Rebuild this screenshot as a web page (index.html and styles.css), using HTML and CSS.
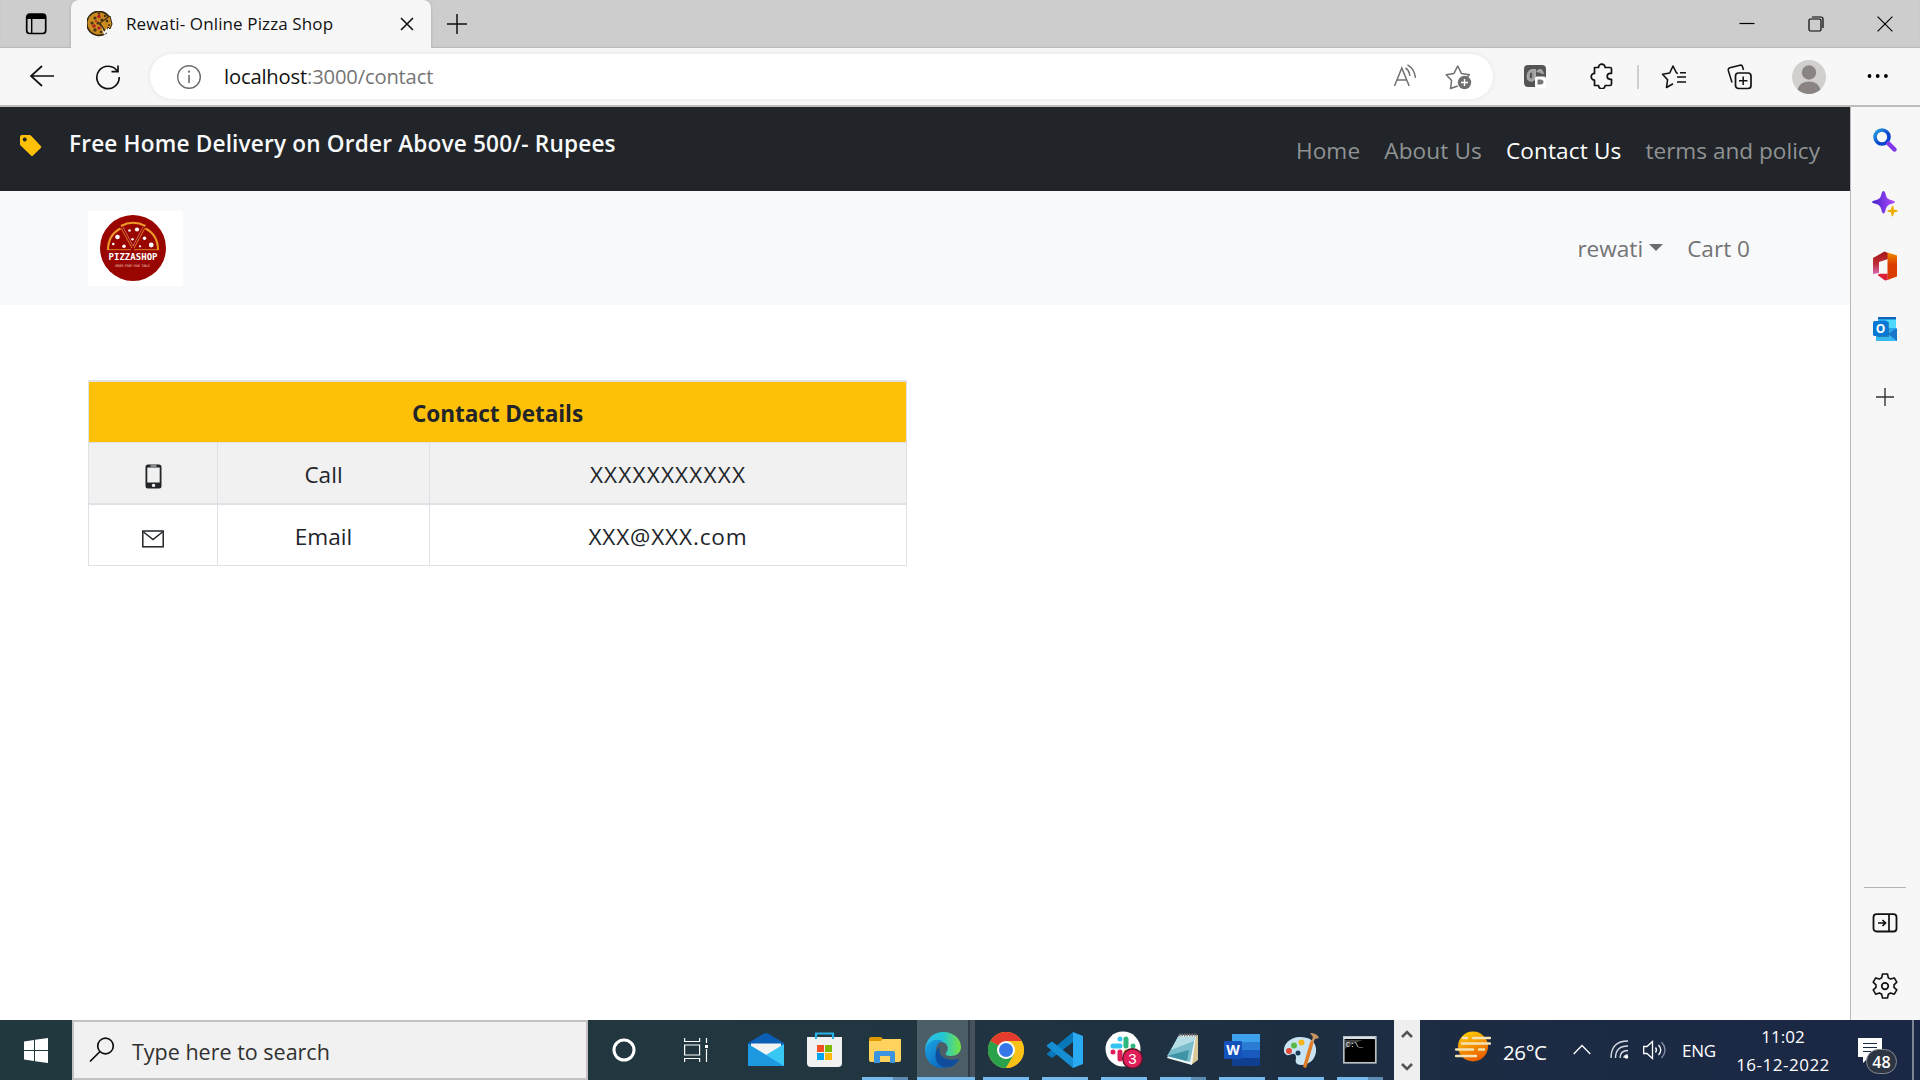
FILE: index.html
```html
<!DOCTYPE html>
<html lang="en">
<head>
<meta charset="utf-8">
<title>Rewati- Online Pizza Shop</title>
<link rel="stylesheet" href="styles.css">
</head>
<body>
<header class="titlebar">
  <div class="tab-actions"><svg width="23" height="22" viewBox="0 0 23 22"><rect x="1.7" y="1.2" width="19" height="19.3" rx="3" fill="none" stroke="#000" stroke-width="1.7"/><path d="M1.5 6V4q0-3 3-3H18q3 0 3 3v2z"/><path d="M6.7 5v15" stroke="#000" stroke-width="1.4"/></svg></div>
  <div class="tab">
    <svg width="26" height="26" viewBox="0 0 26 26"><path d="M13 13 22 6a12 12 0 1 0-3 16z" fill="#c98a20" stroke="#33250f" stroke-width="1.6"/><path d="M13 12 23 5l2 8-2 5-2-2-2 5-2-3z" fill="#c98a20" stroke="#33250f"/><path d="m14 14 3 7 3-4 1 3-4 4z" fill="#f7f7f7"/><g fill="#493414"><circle cx="8" cy="7" r="1.6"/><circle cx="15" cy="9" r="1.6"/><circle cx="5" cy="12" r="1.6"/><circle cx="8" cy="19" r="1.7"/><circle cx="14" cy="21" r="1.3"/><circle cx="11" cy="12" r="1.6"/><circle cx="18" cy="5" r="1.300"/><circle cx="20" cy="10" r="1.400"/><circle cx="22" cy="14" r="1"/><circle cx="12" cy="2.500" r="1.200"/></g><g fill="#b91b22"><circle cx="12" cy="5.500" r="1.800"/><circle cx="7" cy="15" r="1.800"/><circle cx="12" cy="17" r="1.600"/><circle cx="9" cy="10" r="1"/></g></svg>
    <span class="tab-title">Rewati- Online Pizza Shop</span>
    <svg class="tab-close" width="14" height="14" viewBox="0 0 14 14"><path d="M1 1l12 12M13 1 1 13" stroke="#111" stroke-width="1.6"/></svg>
  </div>
  <svg class="new-tab" width="22" height="22" viewBox="0 0 22 22"><path d="M11 1v20M1 11h20" stroke="#111" stroke-width="1.5"/></svg>
  <div class="window-controls">
    <svg width="16" height="16" viewBox="0 0 16 16"><path d="M.5 7.500h15" stroke="#000" stroke-width="1.2"/></svg>
    <svg width="16" height="16" viewBox="0 0 16 16"><rect x="1" y="3" width="12" height="12" rx="1.5" fill="none" stroke="#000" stroke-width="1.2"/><path d="M4 1h9q2 0 2 2v9" fill="none" stroke="#000" stroke-width="1.2"/></svg>
    <svg width="16" height="16" viewBox="0 0 16 16"><path d="M.6.6l14.8 14.8M15.400.6.6 15.400" stroke="#000" stroke-width="1.2"/></svg>
  </div>
</header>

<div class="toolbar">
  <svg class="back" width="26" height="24" viewBox="0 0 26 24"><path d="M13 2 2 12l11 10M2 12h23" fill="none" stroke="#111" stroke-width="1.7"/></svg>
  <svg class="reload" width="26" height="26" viewBox="0 0 26 26"><path d="M22.500 7.500A11.200 11.200 0 1 0 24.200 13M23 1.500v6.200h-6.500" fill="none" stroke="#111" stroke-width="1.7"/></svg>
  <div class="address">
    <svg width="26" height="26" viewBox="0 0 26 26"><circle cx="13" cy="13" r="11.300" fill="none" stroke="#6b6b6b" stroke-width="1.400"/><path d="M13 11v8" stroke="#6b6b6b" stroke-width="1.600"/><circle cx="13" cy="7.700" r="1.100" fill="#6b6b6b"/></svg>
    <span class="url">localhost<span class="url-path">:3000/contact</span></span>
    <svg class="read-aloud" width="24" height="24" viewBox="0 0 24 24"><path d="M1.500 22 8.800 4l7.400 18M4 16h9.500M12.500 4q4 2.500 4.300 8M14.500.8q7 4 8 13" fill="none" stroke="#6f6f6f" stroke-width="1.500"/></svg>
    <svg class="add-star" width="28" height="26" viewBox="0 0 28 26"><path d="M12.800 22 5.500 24.500 6.600 16.500 1.200 10.800 9 9.400 12.700 2l3.700 7.400 8 1.400-2.300 2.500" fill="none" stroke="#6f6f6f" stroke-width="1.500" stroke-linejoin="round"/><circle cx="19.500" cy="18.500" r="6.700" fill="#6f6f6f"/><path d="M19.500 15v7M16 18.500h7" stroke="#fff" stroke-width="1.400"/></svg>
  </div>
  <svg class="extension" width="22" height="23" viewBox="0 0 22 23"><rect width="22" height="22" rx="4" fill="#555"/><path d="M8 5C4 6 3 10 4 14q4 4 7-1V5zM13 7q4-5 6 2" fill="#999" stroke="#aaa" stroke-width="2"/><path d="M7 8v5" stroke="#555" stroke-width="2"/><rect x="11" y="11.500" width="11" height="11.500" rx="2" fill="#fff"/><path d="M13.500 14.500h3q3 0 3 2.500t-3 2.500h-3z" fill="#777"/></svg>
  <svg class="puzzle" width="24" height="26" viewBox="0 0 24 26"><path d="M4.500 4.500h4a3.300 3.300 0 0 1 6.600 0H20q1.500 0 1.500 1.500v4.300h-1.300a3 3 0 0 0 0 6h1.300V21q0 1.500-1.500 1.500h-4.900a3.300 3.300 0 0 1-6.600 0H4.500V17a3.300 3.300 0 0 1 0-6.600z" fill="none" stroke="#111" stroke-width="1.700" stroke-linejoin="round"/></svg>
  <span class="divider"></span>
  <svg class="favorites" width="26" height="26" viewBox="0 0 26 26"><path d="M17 9.200 15.500 9 12 2 8.700 9 1.500 10.200 6.600 15.700 5.500 23.500 12 19.800M16 13h9M16 18h9M19 8.700h6" fill="none" stroke="#111" stroke-width="1.600" stroke-linejoin="round"/></svg>
  <svg class="collections" width="26" height="26" viewBox="0 0 26 26"><rect x="8.500" y="9" width="15.500" height="15.500" rx="3" fill="none" stroke="#111" stroke-width="1.700"/><path d="M16.200 12.500v8.500M12 16.800h8.500M5 18.500 1.300 6.500q-.5-2 1.500-2.800L13 1.200q2-.4 2.600 1.500L16.500 6" fill="none" stroke="#111" stroke-width="1.500"/></svg>
  <svg class="profile" width="34" height="34" viewBox="0 0 34 34"><circle cx="17" cy="17" r="17" fill="#d2d0ce"/><circle cx="17" cy="12.500" r="7.200" fill="#8a8583"/><path d="M5.500 29.500Q8 21.500 17 21.500t11.500 8a17 17 0 0 1-23 0z" fill="#8a8583"/></svg>
  <svg class="more" width="22" height="6" viewBox="0 0 22 6"><circle cx="2.500" cy="3" r="1.900"/><circle cx="10.700" cy="3" r="1.900"/><circle cx="18.900" cy="3" r="1.900"/></svg>
</div>

<div class="workspace">
  <main class="page">
    <nav class="promo">
      <svg width="22" height="22" viewBox="0 0 22 22"><path fill-rule="evenodd" d="M2 0h7.500q.8 0 1.400.6L20.800 11q1 1 0 2L13 20.500q-1 1-2 0L.6 10.500Q0 10 0 9V2Q0 0 2 0zM4.700 2.500a2 2 0 1 0 .1 0z" fill="#ffc107"/></svg>
      <span class="promo-text">Free Home Delivery on Order Above 500/- Rupees</span>
      <div class="links"><a>Home</a><a>About Us</a><a class="active">Contact Us</a><a class="terms">terms and policy</a></div>
    </nav>
    <nav class="shop-nav">
      <svg width="95" height="75" viewBox="0 0 95 75"><rect width="95" height="75" fill="#fff"/><circle cx="45" cy="37" r="33" fill="#990500"/><g fill="none" stroke="#ee9b28"><path d="M20 39Q20 24 32.500 17.500M70 39Q70 24 57.500 17.500M33 15Q45 8.500 57.500 15" stroke-width="2"/><path d="M19 38.700h24M46 38.700h25M33 17l11 20M57 17 46 37" stroke-width=".8"/><path d="m35 16 10 19 10-19" stroke-width=".6" stroke="#e9a493"/></g><g fill="#fff"><circle cx="29.500" cy="26" r="2.300"/><circle cx="49" cy="18.500" r="2.100"/><circle cx="63.200" cy="34" r="2.400"/><circle cx="56.500" cy="27.300" r="1.800"/><circle cx="36" cy="35.300" r="1.800"/><circle cx="41.500" cy="19.500" r="1.300"/><circle cx="44.500" cy="28.300" r="1.200"/><circle cx="25.300" cy="33" r="1.300"/><circle cx="52" cy="35.300" r="1.100"/></g><text class="logo-name" x="45" y="48.700" textLength="49" text-anchor="middle">PIZZASHOP</text><text class="logo-tag" x="44.500" y="55.500" textLength="35" text-anchor="middle">ORDER FROM YOUR TABLE</text></svg>
      <a class="user">rewati</a><span class="caret"></span><a class="cart">Cart 0</a>
    </nav>
    <table class="contact">
      <colgroup><col class="col-icon"><col class="col-label"><col></colgroup>
      <thead><tr><th colspan="3">Contact Details</th></tr></thead>
      <tbody>
        <tr class="striped"><td class="c-icon"><svg width="17" height="25" viewBox="0 0 17 25"><path fill-rule="evenodd" d="M3 .5h11q2.500 0 2.500 2.500v19q0 2.500-2.500 2.500H3Q.5 24.500.5 22V3Q.5.500 3 .5zM2.300 3.500v15h12.400v-15zM5.500 1.500v1h6v-1zM8.500 19.700a1.700 1.700 0 1 0 .1 0z" fill="#212529"/></svg></td><td>Call</td><td><span class="number">XXXXXXXXXXX</span></td></tr>
        <tr><td class="c-icon"><svg width="22" height="18" viewBox="0 0 22 18"><rect x=".8" y="1" width="20.400" height="15.800" fill="none" stroke="#212529" stroke-width="1.500"/><path d="m1.500 2 9.500 7.500L20.500 2" fill="none" stroke="#212529" stroke-width="1.500"/></svg></td><td>Email</td><td><span class="mail">XXX@XXX.com</span></td></tr>
      </tbody>
    </table>
  </main>
  <aside class="sidebar">
    <svg width="26" height="26" viewBox="0 0 26 26"><defs><linearGradient id="ring" x2="1" y2="1"><stop stop-color="#2aa5df"/><stop offset=".6" stop-color="#0b45cf"/></linearGradient></defs><circle cx="10" cy="10" r="7" fill="none" stroke="url(#ring)" stroke-width="3.600"/><path d="m16.500 16.500 6 6" stroke="#8438e8" stroke-width="4.500" stroke-linecap="round"/></svg>
    <svg width="26" height="28" viewBox="0 0 26 28"><defs><linearGradient id="spark"><stop stop-color="#4422c9"/><stop offset="1" stop-color="#b44cff"/></linearGradient></defs><path d="M11.500 1q1.500 0 2.200 3.500 1 4.500 5 5.500 4.300.8 4.300 2t-4.300 2q-4 1-5 5.500-.8 4-2.200 4t-2.200-4q-1-4.500-5-5.500Q0 13.200 0 12t4.300-2q4-1 5-5.500Q10 1 11.500 1z" fill="url(#spark)"/><path d="M20.500 15.500q.8 0 1.500 4 4 .8 4 1.500t-4 1.500q-.7 4-1.500 4t-1.500-4q-4-.8-4-1.500t4-1.500q.7-4 1.500-4z" fill="#edae00"/></svg>
    <svg width="26" height="30" viewBox="0 0 26 30"><defs><linearGradient id="offl" x2="0" y2="1"><stop stop-color="#a51618"/><stop offset=".55" stop-color="#bf2d38"/><stop offset="1" stop-color="#d968b5"/></linearGradient><linearGradient id="offr" x2="0" y2="1"><stop stop-color="#f08b00"/><stop offset=".45" stop-color="#da3b01"/></linearGradient></defs><path d="M1 7 12.500.5 16 2v6L7 11v11l-6 1z" fill="url(#offl)"/><path d="M15.500 1.500 25 4.500v21l-9.500 3.500z" fill="url(#offr)"/><path d="m5.500 24 2-1.300h8.200V29L13 29.500z" fill="#dc2038"/></svg>
    <svg width="26" height="26" viewBox="0 0 26 26"><path d="M6 1h18v15H6z" fill="#28a8ea"/><path d="M14 4h10v8H14z" fill="#50d9ff"/><path d="M6 1h18v2H6z" fill="#1267b4"/><path d="M4 16h21v9H4z" fill="#35b8f1"/><path d="m25 12-9 6 9 7z" fill="#1976c9"/><path d="M5 6h12v15H5z" fill="#15558b" opacity=".6"/><rect x="1" y="5" width="15" height="15" rx="1.500" fill="#0878d4"/><text x="8.500" y="17" text-anchor="middle" class="outlook-o">O</text></svg>
    <svg width="18" height="18" viewBox="0 0 18 18"><path d="M9 0v18M0 9h18" stroke="#333" stroke-width="1.400"/></svg>
    <span class="side-rule"></span>
    <svg width="26" height="20" viewBox="0 0 26 20"><rect x="1.500" y="1.200" width="23" height="17.300" rx="3" fill="none" stroke="#111" stroke-width="1.800"/><path d="M17 1v17.500M6 10h7M10.500 7l3 3-3 3" fill="none" stroke="#111" stroke-width="1.700"/></svg>
    <svg width="26" height="26" viewBox="0 0 26 26"><path d="M10.500 1h5l.8 3.800 2.300 1.300 3.700-1.200 2.500 4.300L22 11.800v2.600l2.800 2.500-2.500 4.300-3.700-1.200-2.300 1.300-.8 3.700h-5l-.8-3.700-2.300-1.300-3.700 1.200-2.500-4.300L4 14.400v-2.600L1.200 9.200l2.500-4.300 3.700 1.200 2.300-1.300z" fill="none" stroke="#111" stroke-width="1.600" stroke-linejoin="round"/><circle cx="13" cy="13.100" r="3.300" fill="none" stroke="#111" stroke-width="1.700"/></svg>
  </aside>
</div>

<footer class="taskbar">
  <div class="start"><svg width="24" height="25" viewBox="0 0 24 25"><path d="M0 3.500 10 2v10H0zM11 1.800 24 0v12H11zM0 13h10v10L0 21.500zM11 13h13v12l-13-1.800z" fill="#fff"/></svg></div>
  <div class="search"><svg width="26" height="26" viewBox="0 0 26 26"><circle cx="16.500" cy="9" r="7.800" fill="none" stroke="#111" stroke-width="1.700"/><path d="M11 14.500 1 24.500" stroke="#111" stroke-width="1.700"/></svg><span>Type here to search</span></div>
  <div class="cell cortana"><svg width="24" height="24" viewBox="0 0 24 24"><circle cx="12" cy="12" r="10" fill="none" stroke="#fff" stroke-width="3"/></svg></div>
  <div class="cell taskview"><svg width="25" height="24" viewBox="0 0 25 24"><path d="M.6 0v3.500h15V0M.6 24v-3.500h15V24M.6 7h15v10h-15zM22.500 0v5M22.500 11v13" fill="none" stroke="#fff" stroke-width="1.200"/><rect x="21" y="7" width="3" height="3" fill="#fff"/></svg></div>

  <div class="cell"><svg width="36" height="34" viewBox="0 0 36 34"><path d="M0 10 15.500.8q2.500-1.500 5 0L36 10v5H0z" fill="#0a5eb5"/><path d="M3 10.500h30v10L18 23 3 20z" fill="#f2f2f2"/><path d="m0 11 18 11 18-11v22H0z" fill="#39c7f4"/><path d="m0 11 36 22H0z" fill="#1d99e2"/></svg></div>
  <div class="cell wide"><svg width="36" height="36" viewBox="0 0 36 36"><path d="M0 5h35v26q0 4-4 4H4q-4 0-4-4z" fill="#f1f1f1"/><path d="M9 7V1.500h17V7" fill="none" stroke="#29b1e8" stroke-width="2.200"/><path d="M10 13h7v7h-7z" fill="#f25022"/><path d="M18 13h7v7h-7z" fill="#7fba00"/><path d="M10 21h7v7h-7z" fill="#00a4ef"/><path d="M18 21h7v7h-7z" fill="#ffb900"/></svg></div>
  <div class="cell wide run multi"><svg width="32" height="28" viewBox="0 0 32 28"><path d="M0 3q0-2 2-2h10l3 3v10H0z" fill="#df9800"/><path d="M0 5h12l2-2h18v21q0 2-2 2H2q-2 0-2-2z" fill="#ffd25d"/><path d="M5 27V17q0-2 2-2h17q2 0 2 2v10h-5v-7H11v7z" fill="#3b94dd"/></svg></div>
  <div class="cell edge"><svg width="36" height="36" viewBox="0 0 36 36"><defs><linearGradient id="edge-top"><stop stop-color="#2bbbea"/><stop offset=".5" stop-color="#25c6d5"/><stop offset="1" stop-color="#75e33f"/></linearGradient><linearGradient id="edge-left" x2="1" y2="1"><stop stop-color="#1ca8e5"/><stop offset="1" stop-color="#0758b6"/></linearGradient></defs><path d="M0 18C1 6 9 0 18 0c11 0 18 7 18 15 0 6-5 9-10 9-4 0-6-1-5-3 4-5 1-11-5-11-8 0-13 3-16 8z" fill="url(#edge-top)"/><path d="M0 18C3 8 11 6 18 9c-5 1-7 5-7 10 0 9 7 15 14 15-3 1-6 2-8 2C8 36 0 29 0 18z" fill="url(#edge-left)"/><path d="M15 15c-3 8 5 15 18 12 1 0 1 1 0 2-4 6-9 7-14 6-7-2-10-9-8-15 1-3 2-4 4-5z" fill="#104d9d"/></svg></div>
  <div class="cell run"><svg width="36" height="36" viewBox="0 0 36 36"><circle cx="18" cy="18" r="18" fill="#fbc116"/><path d="M18 18 2.400 9a18 18 0 0 1 31.200 0z" fill="#e33b2e"/><path d="M2.400 9A18 18 0 0 0 18 36l8-13.500-8-4.500z" fill="#2aa14b"/><path d="M18 9h15.600q2.400 4.500 2.400 9a18 18 0 0 1-18 18l8-13.500z" fill="#fbc116"/><circle cx="18" cy="18" r="9" fill="#fff"/><circle cx="18" cy="18" r="7" fill="#3577e8"/></svg></div>
  <div class="cell run"><svg width="36" height="36" viewBox="0 0 36 36"><path d="M26 0 36 4v28l-10 4z" fill="#2aaaf2"/><path d="M26 0v10L5 26l-5-3.500v-1z" fill="#0878bb"/><path d="M26 36V26L5 9.500 0 13v1.500z" fill="#168ed4"/></svg></div>
  <div class="cell run"><svg width="38" height="38" viewBox="0 0 38 38"><circle cx="18" cy="18" r="17.500" fill="#fff"/><g stroke-width="5" stroke-linecap="round"><path d="M15 8v0M8 15h7" stroke="#36c5f0"/><path d="M21 8v7M28 15v0" stroke="#2eb67d"/><path d="M8 21v0M15 21v7" stroke="#e01e5a"/><path d="M21 21h7" stroke="#ecb22e"/></g><circle cx="27.500" cy="27.500" r="9.800" fill="#e01e5a" stroke="#5c1329" stroke-width="1.400"/><text x="27.500" y="32.800" text-anchor="middle" class="badge-three">3</text></svg></div>
  <div class="cell run multi"><svg width="34" height="34" viewBox="0 0 34 34"><path d="m13 3 19-1v25l-7 5z" fill="#d9c897"/><path d="M13 2h17l-4 30L1 25z" fill="#eef6f7"/><path d="M12 4h17l-5 25L1 23z" fill="#79bccb"/><path d="M12 4h17l-1 4L5 17z" fill="#b5dde5"/><path d="m1 23 22-6-2 11z" fill="#3f93a6"/><path d="M13 2h18" stroke="#777" stroke-width="3" stroke-dasharray="1.500 1"/></svg></div>
  <div class="cell run"><svg width="36" height="32" viewBox="0 0 36 32"><rect x="8" width="28" height="32" rx="2" fill="#2b7cd3"/><path d="M8 0h28v8H8z" fill="#3ea1ec"/><path d="M8 16h28v8H8z" fill="#185abd"/><path d="M8 24h28v8H8z" fill="#103f91"/><rect y="7" width="18" height="18" rx="1.500" fill="#1452bb"/><text x="9" y="21" text-anchor="middle" class="word-w">W</text></svg></div>
  <div class="cell run"><svg width="36" height="36" viewBox="0 0 36 36"><path d="M17 5C7 5 0 12 1 20q2 5 8 2 4-1 4 4-2 7 5 7c10 0 16-8 15-17Q31 5 17 5z" fill="#c7e3f4"/><circle cx="15" cy="21" r="2.500" fill="#183c58"/><circle cx="6" cy="19" r="3" fill="#e34b36"/><circle cx="11" cy="13.500" r="3" fill="#5bb947"/><circle cx="18.500" cy="10.500" r="3" fill="#f5b51e"/><path d="m22 34 7-24" stroke="#e17d26" stroke-width="3.500" stroke-linecap="round"/><path d="m28 10 2-5-3-4q7 0 9 5l-4 1-2 4z" fill="#c7955f"/></svg></div>
  <div class="cell run multi"><svg width="34" height="28" viewBox="0 0 34 28"><rect x=".8" y=".8" width="32" height="26" fill="#000" stroke="#b8c0c5" stroke-width="1.700"/><path d="M1 2h31" stroke="#d5e0e9" stroke-width="2"/><path d="M2 4h18q-10 3-18 9z" fill="#444"/><text x="3" y="11" class="prompt">C:\_</text></svg></div>
  <div class="scroll"><svg width="12" height="8" viewBox="0 0 12 8"><path d="m1 7 5-5 5 5" fill="none" stroke="#555" stroke-width="2.600"/></svg><svg width="12" height="8" viewBox="0 0 12 8"><path d="m1 1 5 5 5-5" fill="none" stroke="#555" stroke-width="2.600"/></svg></div>
  <div class="weather"><svg width="36" height="32" viewBox="0 0 36 32"><defs><linearGradient id="sun" x2=".4" y2="1"><stop stop-color="#ffd500"/><stop offset="1" stop-color="#ea6200"/></linearGradient></defs><circle cx="18" cy="15.500" r="15" fill="url(#sun)"/><path d="M8 7h4M18 7h17M7 12.500h28M1 18.500h17M24 18.500h5M1 25h20" stroke="#f5e3b5" stroke-width="2.400" stroke-linecap="round"/></svg><span>26°C</span></div>
  <svg class="tray-up" width="18" height="11" viewBox="0 0 18 11"><path d="m.7 10 8.300-8.500L17.300 10" fill="none" stroke="#fff" stroke-width="1.300"/></svg>
  <svg class="wifi" width="20" height="20" viewBox="0 0 20 20"><g fill="none" stroke="#d5d9e2" stroke-width="1.400"><path d="M1 18Q1 1 18 1M5.500 18Q5.500 6 18 6M10 18q0-7.500 8-7.500M14 18q0-3 4-3"/></g><circle cx="16.500" cy="17" r="1.800" fill="#fff"/></svg>
  <svg class="volume" width="24" height="20" viewBox="0 0 24 20"><path d="M.7 6.500H4l5.500-5v17l-5.500-5H.7z" fill="none" stroke="#fff" stroke-width="1.300"/><path d="M12.500 7.500q2 2.500 0 5M15.500 5q4.500 5 0 10" fill="none" stroke="#fff" stroke-width="1.300"/><path d="M18.500 2q7 8 0 16" fill="none" stroke="#8891a5" stroke-width="1.300"/></svg>
  <span class="lang">ENG</span>
  <div class="clock"><span>11:02</span><span class="date">16-12-2022</span></div>
  <div class="notice"><svg width="24" height="25" viewBox="0 0 24 25"><path d="M0 0h24v19H11l-6 6v-6H0z" fill="#fff"/><path d="M5 5.500h14M5 9.500h14M5 13.500h8" stroke="#1b2945" stroke-width="1.200"/></svg><span class="count">48</span></div>
  <span class="show-desktop"></span>
</footer>
</body>
</html>
```
FILE: styles.css
```css
* { box-sizing: border-box; }
body { margin: 0; width: 1920px; height: 1080px; overflow: hidden; display: flex; flex-direction: column; font-family: "Open Sans", "Noto Sans", sans-serif; color: #212529; background: #fff; }
svg { display: block; flex: none; }
span, a { white-space: nowrap; }

.titlebar { height: 48px; flex: none; display: flex; align-items: center; background: #cdcdcd; box-shadow: inset 0 -1px 1px #b9b9b9; }
.tab-actions { width: 71px; padding-left: 25px; }
.tab { width: 360px; height: 48px; display: flex; align-items: center; padding: 0 17px 0 16px; background: #f7f7f7; border-radius: 8px 8px 0 0; box-shadow: 0 0 3px #aaa; clip-path: inset(0 -4px 0 -4px); }
.tab-title { margin-left: 13px; padding-bottom: 2px; font-size: 17px; letter-spacing: 0.12px; color: #111; }
.tab-close { margin-left: auto; }
.new-tab { margin: -1px 0 0 15px; }
.window-controls { display: flex; gap: 53px; margin-left: auto; margin-right: 27px; }

.toolbar { height: 59px; flex: none; display: flex; align-items: center; background: #f7f7f7; border-bottom: 2px solid #bdbdbd; }
.back { margin: -2px 0 0 29px; }
.reload { margin-left: 40px; }
.address { width: 1343px; height: 45px; margin-left: 29px; padding: 0 20px 0 26px; display: flex; align-items: center; background: #fff; border-radius: 23px; box-shadow: 0 0 5px #e2e2e2; }
.url { margin-left: 22px; padding-bottom: 2px; font-size: 20.2px; letter-spacing: -0.17px; color: #111; }
.url-path { color: #757575; }
.read-aloud { margin-left: auto; margin-top: -2px; }
.add-star { margin-left: 28px; }
.extension { margin-left: 31px; }
.puzzle { margin: -1px 0 0 44px; }
.divider { width: 2px; height: 24px; margin-left: 23px; background: #cfcfcf; }
.favorites { margin-left: 22px; }
.collections { margin-left: 40px; }
.profile { margin-left: 39px; }
.more { margin: -1px 0 0 41px; }

.workspace { flex: 1; display: flex; min-height: 0; }
.page { width: 1850px; background: #fff; font-size: 22.6px; line-height: 36px; }
.promo { height: 84px; display: flex; align-items: flex-start; padding: 28px 30px 0 20px; background: #212529; }
.promo-text { margin: -9px 0 0 27px; font-weight: 600; letter-spacing: 0.18px; color: #f8f9fa; }
.links { display: flex; margin: -2px 0 0 auto; color: #909294; }
.links a { margin-left: 24px; letter-spacing: 0.12px; }
.links .active { color: #fff; }
.links .terms { letter-spacing: 0; }
.shop-nav { height: 114px; display: flex; align-items: center; padding: 0 100px 0 88px; background: #f8f9fa; color: #727375; }
.user { margin-left: auto; padding-top: 2px; }
.caret { margin: -1px 0 0 6px; border: 7px solid transparent; border-top-color: #6b6c6e; border-bottom: 0; }
.cart { margin-left: 24px; padding-top: 2px; }
.contact { width: 819px; margin: 75px 0 0 88px; table-layout: fixed; border-collapse: collapse; text-align: center; }
.contact th, .contact td { height: 61.500px; padding: 3px 0 0; border: 1px solid #dee2e6; }
.contact th { border-top-width: 2px; font-weight: 700; background: #ffc107; letter-spacing: -0.1px; }
.contact .striped td { background: #f1f1f1; border-bottom-width: 2px; }
.col-icon { width: 129px; }
.col-label { width: 212px; }
.c-icon svg { margin: 4px auto 0; }
.number { letter-spacing: 1.150px; }
.mail { letter-spacing: 0.850px; }

.sidebar { width: 70px; display: flex; flex-direction: column; align-items: center; padding: 20px 2px 0 0; background: #f7f7f7; border-left: 1px solid #b9b9b9; }
.sidebar svg:nth-of-type(2) { margin-top: 37px; }
.sidebar svg:nth-of-type(3) { margin-top: 33px; }
.sidebar svg:nth-of-type(4) { margin-top: 35px; }
.sidebar svg:nth-of-type(5) { margin-top: 46px; }
.side-rule { width: 42px; height: 1px; margin-top: auto; background: #b5b5b5; }
.sidebar svg:nth-of-type(6) { margin-top: 25px; }
.sidebar svg:nth-of-type(7) { margin: 40px 0 21px; }

.taskbar { height: 60px; flex: none; display: flex; align-items: center; background: linear-gradient(90deg, #22383f, #213640 45%, #1d2d42 70%, #1a2745); color: #fff; }
.start { width: 72px; padding-left: 24px; }
.search { width: 516px; height: 60px; display: flex; align-items: center; padding-left: 15px; background: #f1f1f1; border: 2px solid #c3c1c2; color: #303030; }
.search svg { margin-top: 0; }
.search span { margin-left: 17px; padding-top: 3px; font-size: 21.500px; }
.cell { width: 59px; height: 60px; display: flex; align-items: center; justify-content: center; }
.cortana { width: 72px; }
.taskview { width: 76px; padding-right: 4px; }
.wide { width: 60px; }
.run { background: linear-gradient(#76b9ed, #76b9ed) 50% 100% / 46px 3px no-repeat; }
.multi { background: linear-gradient(90deg, #76b9ed 31px, #5c8cb3 31px) 50% 100% / 46px 3px no-repeat; }
.edge { width: 58px; margin: 0 1px 0 2px; padding-right: 7px; background: linear-gradient(#76b9ed, #76b9ed) 0 100% / 100% 3px no-repeat, linear-gradient(90deg, #4b5e67 51px, #303d47 51px, #303d47 53px, #46535e 53px); }
.scroll { width: 26px; height: 60px; margin-left: 5px; display: flex; flex-direction: column; align-items: center; justify-content: space-between; padding: 10px 0 9px; background: #efefef; }
.weather { display: flex; align-items: center; gap: 12px; margin-left: 35px; font-size: 20.500px; }
.weather svg { margin-top: -6px; }
.weather span { width: 70px; padding-top: 3px; letter-spacing: -0.400px; }
.tray-up { margin-top: -2px; }
.wifi { margin-left: 19px; }
.volume { margin-left: 13px; }
.lang { width: 34px; margin-left: 15px; font-size: 17px; letter-spacing: -0.200px; }
.clock { width: 100px; height: 60px; margin-left: 17px; display: flex; flex-direction: column; align-items: center; font-size: 17px; line-height: 28px; padding-top: 3px; }
.date { letter-spacing: 0.500px; }
.notice { position: relative; margin-left: 25px; }
.count { position: absolute; left: 8px; top: 11px; width: 31px; height: 25px; border: 1px solid #85898f; border-radius: 13px; background: #2d3543; text-align: center; font-size: 16px; font-weight: 600; line-height: 24px; }
.show-desktop { width: 2px; height: 60px; margin-left: auto; margin-right: 6px; background: #7b8494; }
.logo-name { font: bold 9px "DejaVu Sans Mono", monospace; fill: #fff; }
.logo-tag { font: 3.500px "DejaVu Sans Mono", monospace; fill: #e5b3aa; }
.outlook-o { font: bold 12px "Open Sans", sans-serif; fill: #fff; }
.badge-three { font: 15px "Liberation Sans", sans-serif; fill: #fff; }
.word-w { font: bold 14px "Open Sans", sans-serif; fill: #fff; }
.prompt { font: 7px "Liberation Mono", monospace; fill: #fff; }
```
